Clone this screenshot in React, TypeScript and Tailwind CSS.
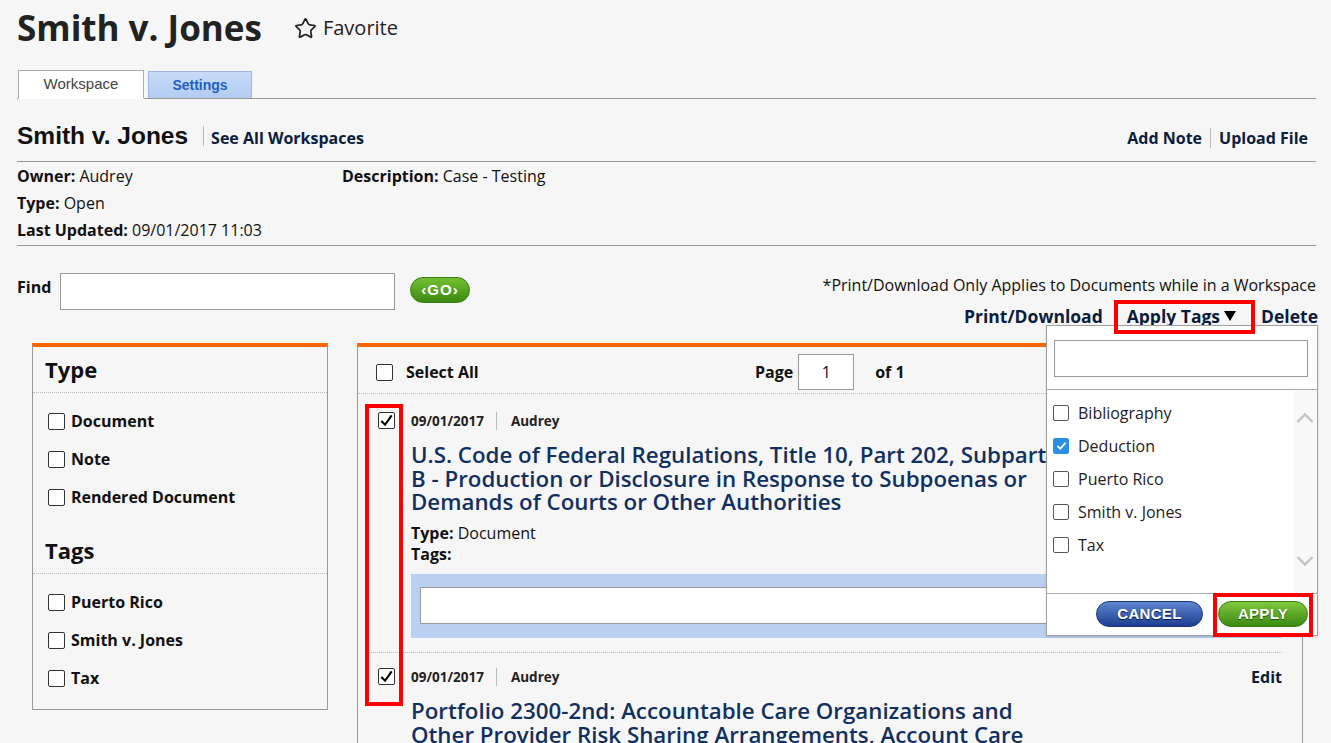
import { Star } from 'lucide-react'

const sans = "font-['Open_Sans',sans-serif]"
const arial = "font-['Liberation_Sans',Arial,sans-serif]"

function Box({ checked = false }: { checked?: boolean }) {
  return (
    <span className="w-[17px] h-[17px] flex-shrink-0 bg-white border border-[#333] rounded-[2px] flex items-center justify-center">
      {checked && (
        <svg viewBox="0 0 16 16" className="w-[15px] h-[15px]">
          <path d="M2.5 8.5 L6.5 12.5 L13.5 2.5" fill="none" stroke="#000" strokeWidth="2.2" />
        </svg>
      )}
    </span>
  )
}

function TagBox({ checked = false }: { checked?: boolean }) {
  return checked ? (
    <span className="w-[16px] h-[16px] flex-shrink-0 bg-[#2b8fe3] border border-[#2b8fe3] rounded-[2px] flex items-center justify-center">
      <svg viewBox="0 0 16 16" className="w-[13px] h-[13px]">
        <path d="M3 8.5 L6.5 12 L13 4.5" fill="none" stroke="#fff" strokeWidth="2" />
      </svg>
    </span>
  ) : (
    <span className="w-[16px] h-[16px] flex-shrink-0 bg-white border border-[#555] rounded-[2px]" />
  )
}

function FilterItem({ label }: { label: string }) {
  return (
    <div className="h-[38px] flex items-center pl-[15px] gap-[6px]">
      <Box />
      <span className="text-[16px] font-bold text-[#111]">{label}</span>
    </div>
  )
}

function ItemHead({ edit = false }: { edit?: boolean }) {
  return (
    <div className="h-[18px] flex items-center text-[13.5px] font-bold text-[#222] leading-[18px]">
      <span>09/01/2017</span>
      <span className="ml-[12px] h-[18px] border-l border-[#bbb]" />
      <span className="ml-[14px]">Audrey</span>
      {edit && <span className="ml-auto text-[16px] text-[#0b1d3c]">Edit</span>}
    </div>
  )
}

export default function App() {
  const tags = ['Bibliography', 'Deduction', 'Puerto Rico', 'Smith v. Jones', 'Tax']

  return (
    <div className={`relative w-[1331px] h-[743px] overflow-hidden bg-[#f6f6f6] text-[#111] ${sans}`}>
      <div className="pl-[17px] pr-[15px]">
        {/* Page title */}
        <div className="pt-[5px] h-[51px] flex items-center">
          <h1 className="text-[35px] leading-[46px] font-bold text-[#222]">Smith v. Jones</h1>
          <div className="ml-[32px] flex items-center gap-[6px] text-[20px] text-[#222]">
            <Star className="w-[23px] h-[23px]" strokeWidth={1.8} />
            <span>Favorite</span>
          </div>
        </div>

        {/* Tabs */}
        <div className={`mt-[19px] flex items-end border-b border-[#999] ${arial}`}>
          <div className="relative -mb-px ml-[1px] w-[126px] h-[29px] bg-white border border-[#aaa] border-b-white flex items-center justify-center text-[15px] text-[#444]">
            Workspace
          </div>
          <div className="ml-[4px] w-[104px] h-[27px] bg-gradient-to-b from-[#c9dcf8] to-[#b2cbf1] border border-[#9fb6dc] border-b-0 flex items-center justify-center text-[14px] font-bold text-[#1f5fbf]">
            Settings
          </div>
        </div>

        {/* Workspace header */}
        <div className="h-[63px] pt-[12px] flex items-center border-b border-[#999]">
          <h2 className={`text-[24.5px] font-bold text-[#111] ${arial}`}>Smith v. Jones</h2>
          <span className="ml-[15px] h-[20px] border-l border-[#bbb]" />
          <a className="ml-[7px] text-[16px] font-bold text-[#0b1d3c] mt-[4px]">See All Workspaces</a>
          <div className="ml-auto mr-[8px] flex items-center text-[16px] font-bold text-[#0b1d3c] mt-[4px]">
            <a>Add Note</a>
            <span className="mx-[8px] h-[20px] border-l border-[#bbb]" />
            <a>Upload File</a>
          </div>
        </div>

        {/* Meta */}
        <div className="h-[84px] pt-[1px] border-b border-[#999] flex text-[16px] leading-[27px] text-[#111]">
          <div className="w-[325px]">
            <div><b>Owner:</b> Audrey</div>
            <div><b>Type:</b> Open</div>
            <div><b>Last Updated:</b> 09/01/2017 11:03</div>
          </div>
          <div><b>Description:</b> Case - Testing</div>
        </div>

        {/* Find + actions */}
        <div className="h-[97px] flex justify-between">
          <div className="pt-[27px] flex items-start">
            <span className="mt-[4px] w-[34px] text-[16px] leading-[20px] font-bold">Find</span>
            <input className="ml-[9px] w-[335px] h-[37px] bg-white border border-[#999] outline-none" />
            <button className={`ml-[15px] mt-[4px] w-[60px] h-[26px] rounded-full bg-gradient-to-b from-[#74c033] to-[#3a8a10] border border-[#3b7c14] text-white text-[15px] font-bold tracking-[1px] flex items-center justify-center ${arial}`}>
              ‹GO›
            </button>
          </div>
          <div className="pt-[29px] flex flex-col items-end">
            <div className="text-[16px] leading-[20px] text-[#111]">*Print/Download Only Applies to Documents while in a Workspace</div>
            <div className="mt-[6px] h-[30px] -mr-[2px] flex items-center text-[17.5px] font-bold text-[#0b1d3c]">
              <a>Print/Download</a>
              <a className="ml-[24px] flex items-center">
                Apply Tags
                <svg viewBox="0 0 12 10" className="ml-[4px] w-[12px] h-[10px]">
                  <path d="M0 0 H12 L6 10 Z" fill="#000" />
                </svg>
              </a>
              <a className="ml-[25px]">Delete</a>
            </div>
          </div>
        </div>

        {/* Panels */}
        <div className="pl-[15px] flex gap-[29px] items-start">
          {/* Filters */}
          <div className="w-[296px] border border-[#999] border-t-[4px] border-t-[#ff6600]">
            <div className="h-[46px] px-[12px] flex items-center border-b border-dotted border-[#bbb] text-[22px] font-bold text-[#111]">Type</div>
            <div className="pt-[9px]">
              <FilterItem label="Document" />
              <FilterItem label="Note" />
              <FilterItem label="Rendered Document" />
            </div>
            <div className="mt-[12px] h-[46px] px-[12px] flex items-center border-b border-dotted border-[#bbb] text-[22px] font-bold text-[#111]">Tags</div>
            <div className="pt-[9px] pb-[12px]">
              <FilterItem label="Puerto Rico" />
              <FilterItem label="Smith v. Jones" />
              <FilterItem label="Tax" />
            </div>
          </div>

          {/* Results */}
          <div className="w-[946px] h-[420px] border-x border-[#999] border-t-[4px] border-t-[#ff6600]">
            <div className="h-[47px] pt-[4px] flex items-center border-b border-dotted border-[#bbb] text-[16px] font-bold">
              <div className="w-[397px] pl-[18px] flex items-center gap-[13px]">
                <Box />
                <span>Select All</span>
              </div>
              <span>Page</span>
              <div className="ml-[5px] w-[56px] h-[36px] bg-white border border-[#999] flex items-center justify-center font-normal text-[16px]">1</div>
              <span className="ml-[21px]">of 1</span>
            </div>

            {/* Item 1 */}
            <div className="ml-[8px] mr-[20px] pt-[18px] pb-[14px] border-b border-dotted border-[#bbb] flex">
              <div className="ml-[12px]"><Box checked /></div>
              <div className="ml-[16px] flex-1">
                <ItemHead />
                <div className="mt-[13px] text-[22.3px] leading-[23.5px] font-semibold text-[#12305f]">
                  U.S. Code of Federal Regulations, Title 10, Part 202, Subpart
                  <br />
                  B - Production or Disclosure in Response to Subpoenas or
                  <br />
                  Demands of Courts or Other Authorities
                </div>
                <div className="mt-[9px] text-[16px] leading-[21px]"><b>Type:</b> Document</div>
                <div className="text-[16px] leading-[21px] font-bold">Tags:</div>
                <div className="mt-[9.5px] h-[64px] bg-[#b9d0f0] px-[9px] pt-[13px]">
                  <input className="w-full h-[37px] bg-white border border-[#999] outline-none" />
                </div>
              </div>
            </div>

            {/* Item 2 */}
            <div className="ml-[8px] mr-[20px] pt-[15px] flex">
              <div className="ml-[12px]"><Box checked /></div>
              <div className="ml-[16px] flex-1">
                <ItemHead edit />
                <div className="mt-[13px] text-[22.3px] leading-[23.5px] font-semibold text-[#12305f]">
                  Portfolio 2300-2nd: Accountable Care Organizations and
                  <br />
                  Other Provider Risk Sharing Arrangements, Account Care
                </div>
              </div>
            </div>
          </div>
        </div>
      </div>

      {/* Apply Tags dropdown */}
      <div className="absolute left-[1046px] top-[325px] w-[272px] h-[311px] bg-white border border-[#a0a0a0] shadow-sm flex flex-col">
        <div className="pt-[14px] pl-[7px] pr-[9px]">
          <input className="w-full h-[37px] bg-white border border-[#999] outline-none" />
        </div>
        <div className="mt-[12px] h-[204px] border-t border-[#aaa] flex">
          <div className="flex-1 pt-[6px] pl-[6px]">
            {tags.map((t) => (
              <div key={t} className="h-[33px] flex items-center gap-[9px] text-[16px] text-[#222]">
                <TagBox checked={t === 'Deduction'} />
                <span>{t}</span>
              </div>
            ))}
          </div>
          <div className="w-[24px] bg-[#f8f8f8] flex flex-col items-center pt-[22px]">
            <svg viewBox="0 0 18 11" className="w-[18px] h-[11px]">
              <path d="M1.5 10 L9 2.5 L16.5 10" fill="none" stroke="#c4c4c4" strokeWidth="2.4" />
            </svg>
            <svg viewBox="0 0 18 11" className="mt-[133px] w-[18px] h-[11px]">
              <path d="M1.5 1 L9 8.5 L16.5 1" fill="none" stroke="#c4c4c4" strokeWidth="2.4" />
            </svg>
          </div>
        </div>
        <div className={`h-[41px] border-t border-[#aaa] flex items-center justify-end pr-[9px] gap-[15px] ${arial}`}>
          <button className="w-[107px] h-[26px] rounded-full bg-gradient-to-b from-[#5f86d0] to-[#1f3f90] border border-[#1b3478] text-white text-[15px] font-bold tracking-[0.3px] [text-shadow:0_1px_1px_#0a1a45]">
            CANCEL
          </button>
          <button className="w-[90px] h-[26px] rounded-full bg-gradient-to-b from-[#80c83e] to-[#3b8a12] border border-[#3a7c14] text-white text-[15px] font-bold tracking-[0.3px] [text-shadow:0_1px_1px_#1d4a05]">
            APPLY
          </button>
        </div>
      </div>

      {/* Highlight annotations */}
      <div className="absolute left-[1114px] top-[300px] w-[141px] h-[34px] border-[4px] border-[#f00] pointer-events-none" />
      <div className="absolute left-[1213px] top-[593px] w-[100px] h-[44px] border-[4px] border-[#f00] pointer-events-none" />
      <div className="absolute left-[365px] top-[404px] w-[38px] h-[302px] border-[4px] border-[#f00] pointer-events-none" />
    </div>
  )
}
